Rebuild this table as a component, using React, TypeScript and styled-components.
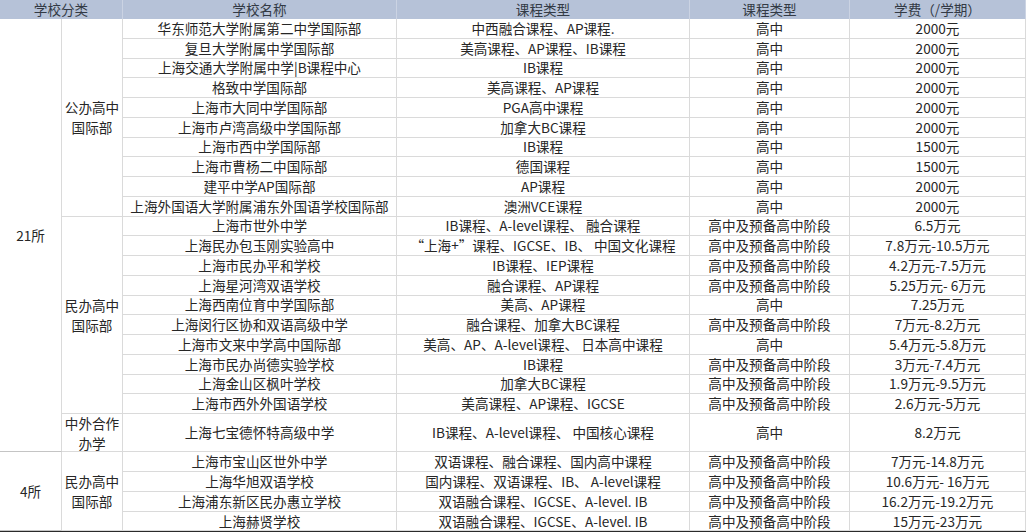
import React from "react";
import styled, { createGlobalStyle } from "styled-components";

const GlobalStyle = createGlobalStyle`
  html, body { margin: 0; padding: 0; background: #ffffff; }
  body {
    font-family: "Noto Sans CJK SC", "Noto Sans", "Liberation Sans", sans-serif;
    color: #262626;
  }
  * { box-sizing: border-box; }
`;

const Grid = styled.div`
  display: grid;
  width: 1026px;
  grid-template-columns: 62px 61px 274px 293px 160px 176px;
  grid-template-rows: 19px repeat(20, 19.75px) 38px 20px 20px 20px 19px;
  border-bottom: 1px solid #2a2a2a;
  font-size: 13.6px;
  line-height: 1.25;
`;

const HeadCell = styled.div<{ $span?: number }>`
  grid-column: span ${(p) => p.$span ?? 1};
  background: #b6c2d8;
  border-right: 1px solid #cbd3e3;
  display: flex;
  align-items: center;
  justify-content: center;
  color: #333a45;
  white-space: nowrap;
`;

const Cell = styled.div`
  border-right: 1px solid #dadada;
  border-bottom: 1px solid #dadada;
  display: flex;
  align-items: center;
  justify-content: center;
  text-align: center;
  white-space: nowrap;
  overflow: hidden;
`;

const GroupCell = styled(Cell)<{ $rows: number }>`
  grid-column: 1;
  grid-row: span ${(p) => p.$rows};
  border-bottom-color: #c4c4c4;
`;

const SubCell = styled(Cell)<{ $rows: number }>`
  grid-column: 2;
  grid-row: span ${(p) => p.$rows};
  white-space: normal;
  line-height: 20px;
`;

type Row = [string, string, string, string];

const gongban: Row[] = [
  ["华东师范大学附属第二中学国际部", "中西融合课程、AP课程.", "高中", "2000元"],
  ["复旦大学附属中学国际部", "美高课程、AP课程、IB课程", "高中", "2000元"],
  ["上海交通大学附属中学|B课程中心", "IB课程", "高中", "2000元"],
  ["格致中学国际部", "美高课程、AP课程", "高中", "2000元"],
  ["上海市大同中学国际部", "PGA高中课程", "高中", "2000元"],
  ["上海市卢湾高级中学国际部", "加拿大BC课程", "高中", "2000元"],
  ["上海市西中学国际部", "IB课程", "高中", "1500元"],
  ["上海市曹杨二中国际部", "德国课程", "高中", "1500元"],
  ["建平中学AP国际部", "AP课程", "高中", "2000元"],
  ["上海外国语大学附属浦东外国语学校国际部", "澳洲VCE课程", "高中", "2000元"],
];

const minban: Row[] = [
  ["上海市世外中学", "IB课程、A-level课程、 融合课程", "高中及预备高中阶段", "6.5万元"],
  ["上海民办包玉刚实验高中", "“上海+”课程、IGCSE、IB、 中国文化课程", "高中及预备高中阶段", "7.8万元-10.5万元"],
  ["上海市民办平和学校", "IB课程、IEP课程", "高中及预备高中阶段", "4.2万元-7.5万元"],
  ["上海星河湾双语学校", "融合课程、AP课程", "高中及预备高中阶段", "5.25万元- 6万元"],
  ["上海西南位育中学国际部", "美高、AP课程", "高中", "7.25万元"],
  ["上海闵行区协和双语高级中学", "融合课程、加拿大BC课程", "高中及预备高中阶段", "7万元-8.2万元"],
  ["上海市文来中学高中国际部", "美高、AP、A-level课程、 日本高中课程", "高中", "5.4万元-5.8万元"],
  ["上海市民办尚德实验学校", "IB课程", "高中及预备高中阶段", "3万元-7.4万元"],
  ["上海金山区枫叶学校", "加拿大BC课程", "高中及预备高中阶段", "1.9万元-9.5万元"],
  ["上海市西外外国语学校", "美高课程、AP课程、IGCSE", "高中及预备高中阶段", "2.6万元-5万元"],
];

const hezuo: Row[] = [
  ["上海七宝德怀特高级中学", "IB课程、A-level课程、 中国核心课程", "高中", "8.2万元"],
];

const minban4: Row[] = [
  ["上海市宝山区世外中学", "双语课程、融合课程、国内高中课程", "高中及预备高中阶段", "7万元-14.8万元"],
  ["上海华旭双语学校", "国内课程、双语课程、IB、 A-level课程", "高中及预备高中阶段", "10.6万元- 16万元"],
  ["上海浦东新区民办惠立学校", "双语融合课程、IGCSE、A-level. IB", "高中及预备高中阶段", "16.2万元-19.2万元"],
  ["上海赫贤学校", "双语融合课程、IGCSE、A-level. IB", "高中及预备高中阶段", "15万元-23万元"],
];

const DataRows: React.FC<{ rows: Row[]; prefix: string }> = ({ rows, prefix }) => (
  <>
    {rows.map((r, i) =>
      r.map((t, j) => <Cell key={`${prefix}-${i}-${j}`}>{t}</Cell>)
    )}
  </>
);

export default function App() {
  return (
    <>
      <GlobalStyle />
      <Grid>
        <HeadCell $span={2}>学校分类</HeadCell>
        <HeadCell>学校名称</HeadCell>
        <HeadCell>课程类型</HeadCell>
        <HeadCell>课程类型</HeadCell>
        <HeadCell>学费（/学期）</HeadCell>

        <GroupCell $rows={21}>21所</GroupCell>
        <SubCell $rows={10}>
          公办高中
          <br />
          国际部
        </SubCell>
        <DataRows rows={gongban} prefix="g" />
        <SubCell $rows={10}>
          民办高中
          <br />
          国际部
        </SubCell>
        <DataRows rows={minban} prefix="m" />
        <SubCell $rows={1}>
          中外合作
          <br />
          办学
        </SubCell>
        <DataRows rows={hezuo} prefix="h" />

        <GroupCell $rows={4}>4所</GroupCell>
        <SubCell $rows={4}>
          民办高中
          <br />
          国际部
        </SubCell>
        <DataRows rows={minban4} prefix="b" />
      </Grid>
    </>
  );
}
